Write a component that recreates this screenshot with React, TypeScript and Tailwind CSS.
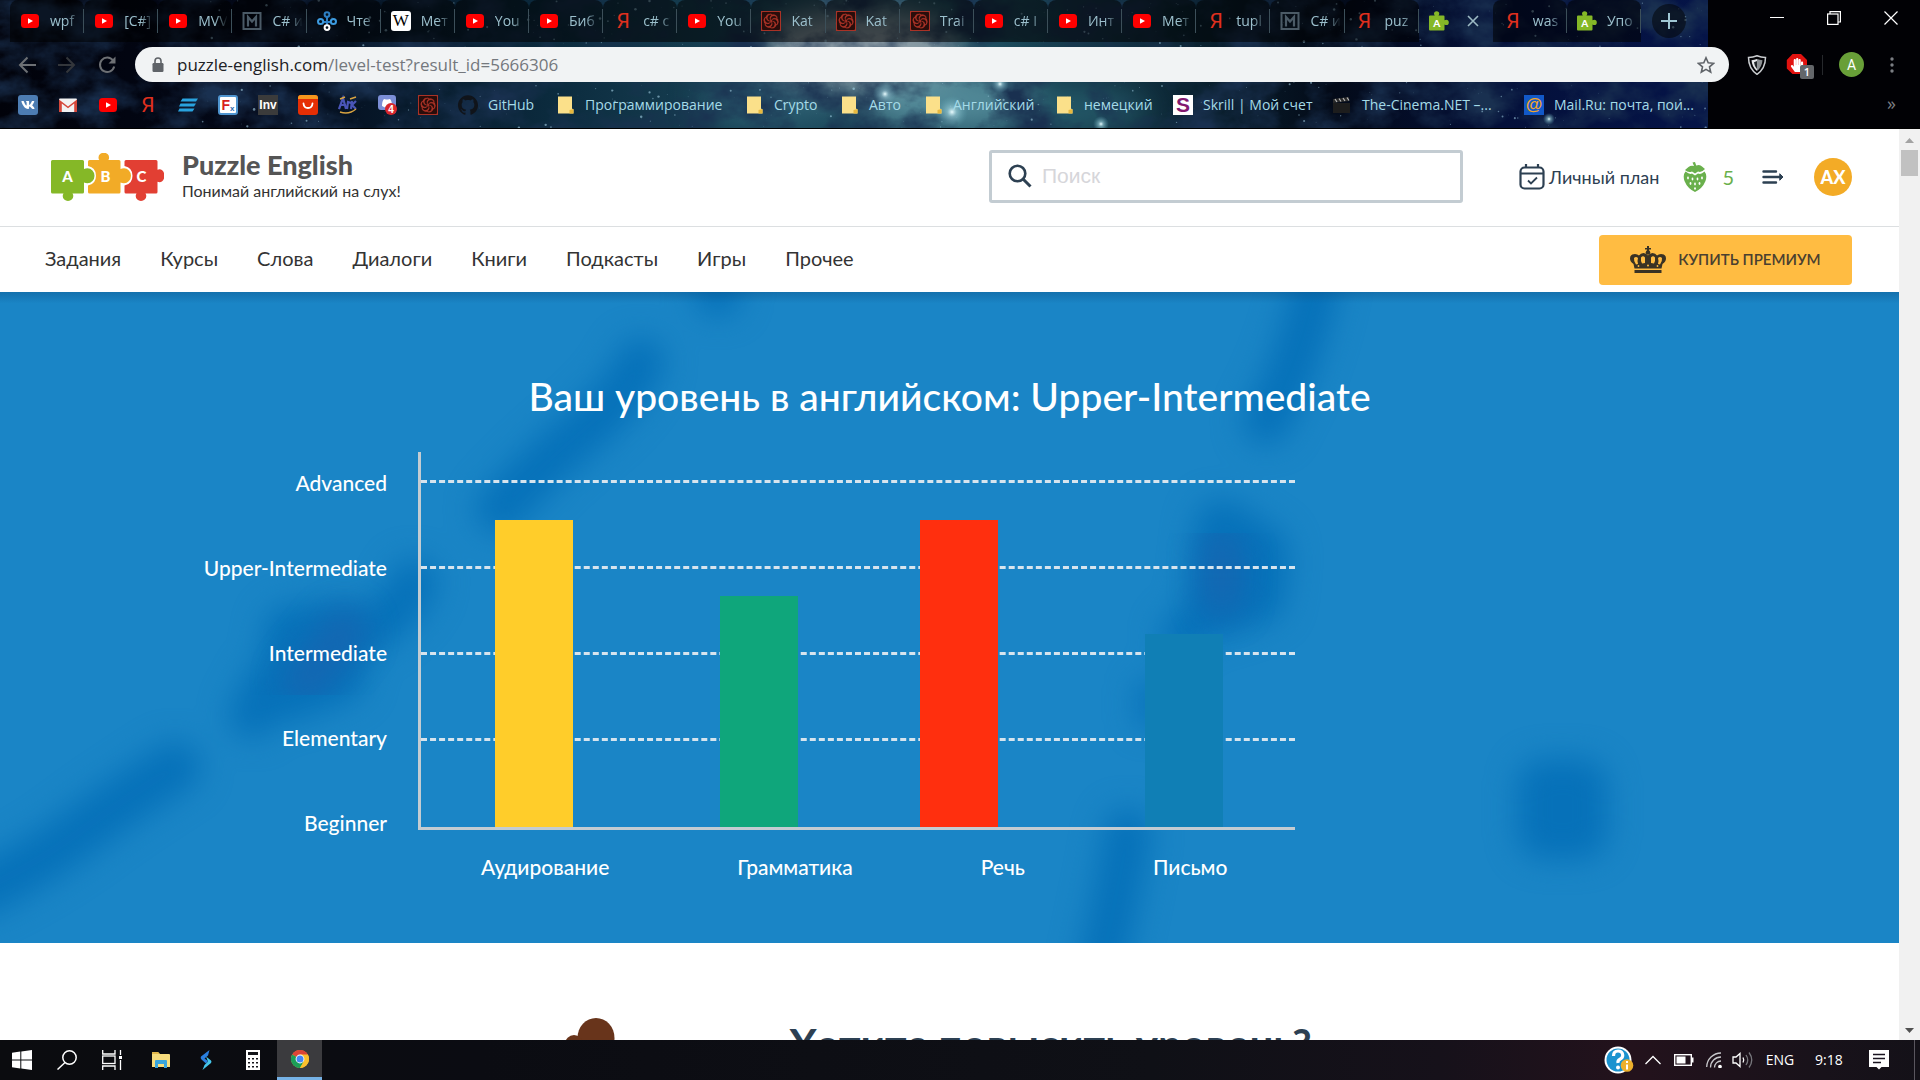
import type { ReactNode } from "react";
import { SiCodewars, SiGithub } from "react-icons/si";
import { FaVk, FaHandPaper } from "react-icons/fa";

/* ---------- favicons ---------- */

const YouTube = () => (
  <svg className="h-5 w-5 shrink-0" viewBox="0 0 20 20" aria-hidden="true">
    <rect x="1" y="3" width="18" height="14" rx="3.5" fill="#ff0000" />
    <path d="M8 7.2v5.6l5-2.8z" fill="#fff" />
  </svg>
);

const Yandex = () => (
  <span className="flex h-5 w-5 shrink-0 items-center justify-center font-['Roboto',sans-serif] text-[21px] leading-5 text-[#e0301e]">
    Я
  </span>
);

const Metanit = () => (
  <svg className="h-5 w-5 shrink-0" viewBox="0 0 20 20" fill="none" stroke="#4b5a66" aria-hidden="true">
    <rect x="1.5" y="2" width="17" height="16" strokeWidth="2" />
    <path d="M6 15.5V6l4 4.5L14 6v9.5" strokeWidth="2.2" />
  </svg>
);

const Nodes = () => (
  <svg className="h-5 w-5 shrink-0" viewBox="0 0 20 20" fill="none" strokeWidth="2" aria-hidden="true">
    <path d="M10 5v10M5 11h10" stroke="#2d7fc4" />
    <circle cx="10" cy="3.6" r="2.4" stroke="#2d7fc4" fill="#04101c" />
    <circle cx="3.6" cy="10.5" r="2.6" stroke="#3d9be0" fill="#04101c" />
    <circle cx="16.4" cy="10.5" r="2.6" stroke="#3d9be0" fill="#04101c" />
    <circle cx="10" cy="16.6" r="2.4" stroke="#fff" fill="#04101c" />
  </svg>
);

const Wiki = () => (
  <span className="flex h-5 w-5 shrink-0 items-center justify-center rounded-[3px] bg-white font-['Liberation_Serif',serif] text-[17px] leading-5 text-black">
    W
  </span>
);

const Codewars = () => (
  <span className="flex h-5 w-5 shrink-0 items-center justify-center bg-[#a93226]">
    <SiCodewars className="h-[18px] w-[18px] text-[#2a0d0b]" />
  </span>
);

const PuzzlePiece = () => (
  <svg className="h-5 w-5 shrink-0" viewBox="0 0 20 20" aria-hidden="true">
    <path
      d="M0 5.5Q0 4.500 1 4.500H5.800Q5 3.500 5 2.800A2.600 2.600 0 0 1 10.300 2.800Q10.300 3.500 9.500 4.500H14.500Q15.500 4.500 15.500 5.500V9.300Q16.500 8.800 17.200 8.800A2.500 2.500 0 0 1 17.200 14Q16.500 14 15.500 13.400V18.500Q15.500 19.500 14.500 19.500H1Q0 19.500 0 18.500Z"
      fill="#85b827"
    />
    <text x="7.800" y="15.500" textAnchor="middle" fontFamily="Lato, sans-serif" fontWeight="900" fontSize="10" fill="#fff">
      A
    </text>
  </svg>
);

const Folder = () => (
  <svg className="h-5 w-5 shrink-0" viewBox="0 0 20 20" aria-hidden="true">
    <path d="M3 1.500h14v12l1.500 1v4H3z" fill="#fbe08a" />
    <path d="M14.500 18.500v-3.500l4-1v4.500z" fill="#e8b93e" />
  </svg>
);

/* ---------- browser data ---------- */

type Tab = { icon: () => ReactNode; text: string; active?: boolean };

const tabs: Tab[] = [
  { icon: YouTube, text: "wpf" },
  { icon: YouTube, text: "[C#]" },
  { icon: YouTube, text: "MVV" },
  { icon: Metanit, text: "C# и" },
  { icon: Nodes, text: "Чте" },
  { icon: Wiki, text: "Мет" },
  { icon: YouTube, text: "You" },
  { icon: YouTube, text: "Биб" },
  { icon: Yandex, text: "c# с" },
  { icon: YouTube, text: "You" },
  { icon: Codewars, text: "Kat" },
  { icon: Codewars, text: "Kat" },
  { icon: Codewars, text: "Trai" },
  { icon: YouTube, text: "c# I" },
  { icon: YouTube, text: "Инт" },
  { icon: YouTube, text: "Мет" },
  { icon: Yandex, text: "tupl" },
  { icon: Metanit, text: "C# и" },
  { icon: Yandex, text: "puz" },
  { icon: PuzzlePiece, text: "", active: true },
  { icon: Yandex, text: "was" },
  { icon: PuzzlePiece, text: "Упо" },
];

const iconBookmarks: { name: string; icon: ReactNode }[] = [
  {
    name: "VK",
    icon: (
      <span className="flex h-5 w-5 items-center justify-center rounded-[3px] bg-[#4d7db3]">
        <FaVk className="h-3.5 w-3.5 text-white" />
      </span>
    ),
  },
  {
    name: "Gmail",
    icon: (
      <svg className="h-5 w-5" viewBox="0 0 20 20" aria-hidden="true">
        <rect x="1" y="3.500" width="18" height="13.500" rx="1" fill="#f2f2f2" />
        <path d="M1 17V4.500L10 11.500 19 4.500V17h-2.800V8.500L10 13.200 3.800 8.500V17z" fill="#d5483b" />
      </svg>
    ),
  },
  { name: "YouTube", icon: <YouTube /> },
  { name: "Яндекс", icon: <Yandex /> },
  {
    name: "Полосы",
    icon: (
      <svg className="h-5 w-5" viewBox="0 0 20 20" fill="#29a3df" aria-hidden="true">
        <path d="M4.500 3.500H20l-2 3H2.500zM2.500 8.500H18l-2 3H1zM1.500 13.500H16.500l-2 3H0z" />
      </svg>
    ),
  },
  {
    name: "Fx",
    icon: (
      <span className="flex h-5 w-5 items-center justify-center rounded-[3px] border-2 border-[#4f95d0] bg-white font-['Liberation_Sans',sans-serif] text-sm leading-4 font-bold text-[#d81e1e]">
        F<span className="self-end text-[8px] leading-2 text-[#2b6cb0]">x</span>
      </span>
    ),
  },
  {
    name: "Inv",
    icon: (
      <span className="flex h-5 w-5 items-center justify-center bg-[#3b3b3b] font-['Liberation_Sans',sans-serif] text-[12px] leading-5 font-bold text-white">
        Inv
      </span>
    ),
  },
  {
    name: "AliExpress",
    icon: (
      <svg className="h-5 w-5" viewBox="0 0 20 20" aria-hidden="true">
        <rect width="20" height="20" rx="3" fill="#e62e04" />
        <path d="M0 3a3 3 0 0 1 3-3h14a3 3 0 0 1 3 3v1H0z" fill="#f7971d" />
        <path d="M5.500 8.500c.5 6 8.500 6 9 0" fill="none" stroke="#fff" strokeWidth="1.800" strokeLinecap="round" />
      </svg>
    ),
  },
  {
    name: "Ark",
    icon: (
      <svg className="h-5 w-5" viewBox="0 0 20 20" fill="none" aria-hidden="true">
        <path d="M1 14L5 3l3 11M3 10h5M9 14l1-7 3 1M13 14l1-8M18 6l-4 4 4 4" stroke="#4a55b8" strokeWidth="2.200" />
        <path d="M2 4l5-2M2 17q9 3 16-3M12 4l6-2" stroke="#d9a441" strokeWidth="1.400" />
      </svg>
    ),
  },
  {
    name: "Discord",
    icon: (
      <svg className="h-5 w-5" viewBox="0 0 20 20" aria-hidden="true">
        <path d="M3 0h12q3 0 3 3v15l-4-3H3q-3 0-3-3V3q0-3 3-3z" fill="#7b8ed6" />
        <path d="M4 11q0-5 2-7l2 .6h2L12 4q2 2 2 7l-3 1.500-1-1.200H8L7 12.500z" fill="#fff" />
        <circle cx="13" cy="14" r="6" fill="#d8262c" />
        <text x="13" y="17.500" textAnchor="middle" fontFamily="Liberation Sans, sans-serif" fontWeight="700" fontSize="10" fill="#fff">
          4
        </text>
      </svg>
    ),
  },
  { name: "Codewars", icon: <Codewars /> },
];

const Skrill = () => (
  <span className="flex h-5 w-5 shrink-0 items-center justify-center bg-white font-['Liberation_Sans',sans-serif] text-[21px] leading-5 font-bold text-[#82196f]">
    S
  </span>
);

const Cinema = () => (
  <svg className="h-5 w-5 shrink-0" viewBox="0 0 20 20" aria-hidden="true">
    <rect x="1" y="8" width="17" height="10" fill="#1d1d1d" />
    <path d="M1 4l16-2v4L1 8z" fill="#2b2b2b" />
    <path d="M3 4l2 3M7 3.500l2 3M11 3l2 3M15 2.500l2 3" stroke="#b8b8b8" strokeWidth="1.200" />
  </svg>
);

const MailRu = () => (
  <span className="flex h-5 w-5 shrink-0 items-center justify-center bg-[#1259c9] font-['Liberation_Sans',sans-serif] text-[17px] leading-5 font-bold text-[#f2a62c]">
    @
  </span>
);

const textBookmarks: { text: string; icon: ReactNode; width: string }[] = [
  { text: "GitHub", icon: <SiGithub className="h-5 w-5 shrink-0 text-[#10141a]" />, width: "w-[97px]" },
  { text: "Программирование", icon: <Folder />, width: "w-[189px]" },
  { text: "Crypto", icon: <Folder />, width: "w-[95px]" },
  { text: "Авто", icon: <Folder />, width: "w-[84px]" },
  { text: "Английский", icon: <Folder />, width: "w-[131px]" },
  { text: "немецкий", icon: <Folder />, width: "w-[119px]" },
  { text: "Skrill | Мой счет", icon: <Skrill />, width: "w-[159px]" },
  { text: "The-Cinema.NET –...", icon: <Cinema />, width: "w-[192px]" },
  { text: "Mail.Ru: почта, пои...", icon: <MailRu />, width: "w-[180px]" },
];

/* ---------- browser theme: night sky ---------- */

const stars = Array.from({ length: 620 }, (_, i) => {
  const a = Math.abs(Math.sin(i * 12.9898 + 4.1) * 43758.5453) % 1;
  const b = Math.abs(Math.sin(i * 78.233 + 1.7) * 24634.6345) % 1;
  const c = Math.abs(Math.sin(i * 39.425 + 2.3) * 13758.1234) % 1;
  return { x: 200 + a * 1508, y: b * 128, r: 0.4 + c * c * c * 0.9, o: 0.15 + c * 0.45 };
});

const NightSky = () => (
  <svg
    className="absolute inset-0 h-full w-full"
    viewBox="0 0 1920 128"
    preserveAspectRatio="xMidYMid slice"
    aria-hidden="true"
  >
    <defs>
      <linearGradient id="sky" x1="0" x2="1708" y1="0" y2="0" gradientUnits="userSpaceOnUse">
        <stop offset="0" stopColor="#01020a" />
        <stop offset="0.15" stopColor="#030818" />
        <stop offset="0.32" stopColor="#0b2a3d" />
        <stop offset="0.45" stopColor="#1a4558" />
        <stop offset="0.58" stopColor="#1d4c5e" />
        <stop offset="0.7" stopColor="#0a2230" />
        <stop offset="0.78" stopColor="#030a18" />
        <stop offset="0.88" stopColor="#04103a" />
        <stop offset="1" stopColor="#051448" />
      </linearGradient>
      <filter id="soft" x="-30%" y="-60%" width="160%" height="220%" colorInterpolationFilters="sRGB">
        <feGaussianBlur stdDeviation="16" />
      </filter>
      <filter id="cloud" x="0" y="0" width="100%" height="100%">
        <feTurbulence type="fractalNoise" baseFrequency="0.018 0.025" numOctaves="5" seed="8" />
        <feColorMatrix values="0 0 0 0 0.01  0 0 0 0 0.03  0 0 0 0 0.08  2.6 0 0 0 -1" />
      </filter>
      <radialGradient id="glow">
        <stop offset="0" stopColor="#eafcff" />
        <stop offset="0.3" stopColor="#9fd3dd" stopOpacity="0.6" />
        <stop offset="1" stopColor="#5fa5b5" stopOpacity="0" />
      </radialGradient>
    </defs>
    <rect width="1920" height="128" fill="#010105" />
    <rect width="1708" height="128" fill="url(#sky)" />
    <g filter="url(#soft)">
      <ellipse cx="860" cy="50" rx="100" ry="40" fill="#9aa6ae" opacity="0.9" />
      <ellipse cx="950" cy="100" rx="90" ry="32" fill="#5f98a6" opacity="0.8" />
      <ellipse cx="770" cy="100" rx="70" ry="26" fill="#336a7c" opacity="0.7" />
      <ellipse cx="1080" cy="110" rx="70" ry="20" fill="#2c6878" opacity="0.7" />
    </g>
    <rect width="1708" height="128" filter="url(#cloud)" />
    {stars.map((s, i) => (
      <circle key={i} cx={s.x} cy={s.y} r={s.r} fill="#a8d4e8" opacity={s.o} />
    ))}
    <circle cx="885" cy="94" r="12" fill="url(#glow)" />
    <circle cx="952" cy="112" r="16" fill="url(#glow)" />
    <circle cx="1000" cy="84" r="9" fill="url(#glow)" />
    <circle cx="1101" cy="124" r="8" fill="url(#glow)" />
    <circle cx="1549" cy="119" r="6" fill="url(#glow)" />
    <rect x="1708" width="212" height="128" fill="#010105" />
  </svg>
);

const Browser = () => (
  <header className="relative shrink-0 border-b border-black bg-black font-['Open_Sans',sans-serif]">
    <NightSky />
    <div className="relative">
      <div className="flex h-[42px] pl-2.5">
        <ul className="flex min-w-0 flex-1">
          {tabs.map((t, i) => (
            <li
              key={i}
              className={
                t.active ? "flex min-w-0 flex-1 items-center" : "flex min-w-0 flex-1 items-center rounded-t-lg bg-black/55"
              }
            >
              {t.active ? (
                <div className="flex w-full items-center justify-between pr-2.5 pl-2.5">
                  <t.icon />
                  <button aria-label="Закрыть вкладку" className="p-1">
                    <svg className="h-3 w-3" viewBox="0 0 12 12" stroke="#9dbac4" strokeWidth="1.600" aria-hidden="true">
                      <path d="M1 1l10 10M11 1L1 11" />
                    </svg>
                  </button>
                </div>
              ) : (
                <button className="flex h-6 min-w-0 flex-1 items-center gap-2.5 border-r border-[#3c4f59] pl-2.5">
                  <t.icon />
                  <span className="min-w-0 flex-1 text-left text-sm whitespace-nowrap text-[#9cc0cd] [mask-image:linear-gradient(to_right,black_50%,transparent_90%)]">
                    {t.text}
                  </span>
                </button>
              )}
            </li>
          ))}
        </ul>
        <div className="flex w-[279px] shrink-0 justify-between pr-[22px] pl-[11px]">
          <button
            aria-label="Новая вкладка"
            className="mt-1 flex h-[34px] w-[34px] items-center justify-center rounded-full bg-black/50"
          >
            <svg className="h-4 w-4" viewBox="0 0 16 16" stroke="#9fc6d4" strokeWidth="2" aria-hidden="true">
              <path d="M8 0v16M0 8h16" />
            </svg>
          </button>
          <div className="flex h-9 items-center gap-[43px]">
            <button aria-label="Свернуть">
              <svg className="h-3.5 w-3.5" viewBox="0 0 14 14" stroke="#fff" aria-hidden="true">
                <path d="M0 6.500h14" />
              </svg>
            </button>
            <button aria-label="Восстановить">
              <svg className="h-3.5 w-3.5" viewBox="0 0 14 14" fill="none" stroke="#fff" strokeWidth="1.200" aria-hidden="true">
                <rect x="0.600" y="3" width="10.400" height="10.400" />
                <path d="M3 3V.6h10.400V11H11" />
              </svg>
            </button>
            <button aria-label="Закрыть">
              <svg className="h-3.5 w-3.5" viewBox="0 0 14 14" stroke="#fff" strokeWidth="1.200" aria-hidden="true">
                <path d="M.5.5l13 13M13.500.5l-13 13" />
              </svg>
            </button>
          </div>
        </div>
      </div>

      <div className="flex items-center pt-[5px] pr-5 pl-[18px]">
        <div className="flex w-[117px] items-center gap-[22px]">
          <button aria-label="Назад">
            <svg className="h-[18px] w-[18px]" viewBox="0 0 18 18" fill="none" stroke="#6d7074" strokeWidth="2" aria-hidden="true">
              <path d="M18 9H2M9.500 1.500L2 9l7.500 7.500" />
            </svg>
          </button>
          <button aria-label="Вперёд">
            <svg className="h-[18px] w-[18px]" viewBox="0 0 18 18" fill="none" stroke="#33363b" strokeWidth="2" aria-hidden="true">
              <path d="M0 9h16M8.500 1.500L16 9l-7.500 7.500" />
            </svg>
          </button>
          <button aria-label="Обновить">
            <svg className="h-[18px] w-[18px]" viewBox="0 0 18 18" fill="none" stroke="#6d7074" strokeWidth="2" aria-hidden="true">
              <path d="M15 4.500A7.200 7.200 0 1 0 16.200 10.500" />
              <path d="M17.500.5v7h-7z" fill="#6d7074" stroke="none" />
            </svg>
          </button>
        </div>
        <div className="flex h-[35px] min-w-0 flex-1 items-center rounded-full bg-[#f1f3f4] pr-3.5 pl-4">
          <svg className="mr-3 h-4 w-3.5 shrink-0" viewBox="0 0 14 16" aria-hidden="true">
            <rect x="1.500" y="6" width="11" height="9" rx="1.200" fill="#5f6368" />
            <path d="M4 6.500V4a3 3 0 0 1 6 0v2.500" fill="none" stroke="#5f6368" strokeWidth="1.600" />
          </svg>
          <a href="#url" className="flex-1 text-[17px] whitespace-nowrap text-[#202124]">
            puzzle-english.com<span className="text-[#74787d]">/level-test?result_id=5666306</span>
          </a>
          <button aria-label="Добавить в закладки">
            <svg className="h-[18px] w-[18px]" viewBox="0 0 18 18" fill="none" stroke="#5f6368" strokeWidth="1.600" strokeLinejoin="miter" aria-hidden="true">
              <path d="M9 1.800l2.200 5 5.400.5-4.100 3.600 1.200 5.300L9 13.400l-4.700 2.800 1.200-5.300L1.400 7.300l5.400-.5z" />
            </svg>
          </button>
        </div>
        <div className="flex items-center pl-[18px]">
          <button aria-label="Adguard">
            <svg className="h-5 w-5" viewBox="0 0 20 20" aria-hidden="true">
              <path d="M10 .8Q14 2.500 18.500 2.500 18.500 13.500 10 19.300 1.500 13.500 1.500 2.500 6 2.500 10 .8z" fill="none" stroke="#c9ccd0" strokeWidth="1.500" />
              <path d="M10 4Q12.500 5 15.500 5.200 15 12 10 16z" fill="#8c9094" />
              <path d="M10 4Q7.500 5 4.500 5.200 5 12 10 16z" fill="#e6e8ea" />
              <path d="M10 6v8Q7.500 11.500 7 7.200z" fill="#23272b" />
            </svg>
          </button>
          <button aria-label="AdBlock" className="relative ml-[19px] flex h-6 w-6 items-center">
            <svg className="absolute top-0 left-0 h-[22px] w-[22px]" viewBox="0 0 22 22" aria-hidden="true">
              <path d="M6.500 1h8.500L21 7v8.500L15 21H6.500L.8 15.500V7z" fill="#e2120f" />
            </svg>
            <FaHandPaper className="relative ml-1 h-3.5 w-3.5 text-white" />
            <span className="absolute top-3 left-3.5 flex h-3.5 w-3.5 items-center justify-center rounded-[2px] bg-[#63666a] text-[11px] leading-3.5 font-semibold text-white">
              1
            </span>
          </button>
          <span className="ml-3 h-5 w-px bg-[#26282c]" />
          <button
            aria-label="Профиль"
            className="ml-4 flex h-[25px] w-[25px] items-center justify-center rounded-full bg-[#689f38] font-['Roboto',sans-serif] text-sm text-white"
          >
            A
          </button>
          <button aria-label="Меню" className="ml-5 w-4">
            <svg className="mx-auto h-4 w-1" viewBox="0 0 4 16" fill="#7b7e83" aria-hidden="true">
              <circle cx="2" cy="2" r="1.700" />
              <circle cx="2" cy="8" r="1.700" />
              <circle cx="2" cy="14" r="1.700" />
            </svg>
          </button>
        </div>
      </div>

      <nav
        aria-label="Закладки"
        className="flex h-[46px] items-center pr-6 pl-[18px] text-sm whitespace-nowrap text-[#a5dbe8]"
      >
        {iconBookmarks.map((b) => (
          <a key={b.name} href="#bookmark" aria-label={b.name} className="mr-5 shrink-0">
            {b.icon}
          </a>
        ))}
        {textBookmarks.map((b) => (
          <a key={b.text} href="#bookmark" className={`${b.width} flex shrink-0 items-center gap-2.5`}>
            {b.icon}
            <span>{b.text}</span>
          </a>
        ))}
        <button aria-label="Другие закладки" className="ml-auto pb-1 text-lg text-[#7b7e83]">
          »
        </button>
      </nav>
    </div>
  </header>
);

/* ---------- site ---------- */

const Logo = () => (
  <svg className="h-12 w-[113px] shrink-0" viewBox="0 0 113 48" aria-hidden="true">
    <path
      d="M0 8.500q0-1.500 1.500-1.500h30q1.500 0 1.500 1.500V16q1.500-.8 3.500-.8a7 7.500 0 0 1 0 15Q34.500 30.200 33 29.500v9.500q0 1.500-1.500 1.500H21.500q.8 1 .8 2.500a5.300 5 0 0 1-10.600 0q0-1.500.8-2.500H1.500Q0 40.500 0 39z"
      fill="#85b827"
    />
    <path
      d="M37 8.500q0-1.500 1.500-1.500h9.800q-.8-1-.8-2.500a5.300 4.800 0 0 1 10.600 0q0 1.500-.8 2.500H68q1.500 0 1.500 1.500V16q1.500-.8 3.500-.8a7 7.500 0 0 1 0 15q-2 0-3.500-.7v9.500q0 1.500-1.500 1.500H38.500Q37 40.500 37 39v-6.500q8-1.500 8-9.800t-8-9.800z"
      fill="#f2ab27"
    />
    <path
      d="M73.500 8.500q0-1.500 1.500-1.500h30q1.500 0 1.500 1.500v8.200q4.500-1.700 6.500 3.300v5.500q-2 5-6.500 3.300V39q0 1.500-1.500 1.500H94.500q.8 1 .8 2.500a5.300 5 0 0 1-10.600 0q0-1.500.8-2.500H75q-1.500 0-1.500-1.500v-6.500q8-1.500 8-9.800t-8-9.800z"
      fill="#e23f33"
    />
    <g fill="#fff" fontFamily="Lato, sans-serif" fontWeight="900" fontSize="15" textAnchor="middle">
      <text x="16.500" y="29">A</text>
      <text x="54.500" y="29">B</text>
      <text x="90.500" y="29">C</text>
    </g>
  </svg>
);

const Calendar = () => (
  <svg className="h-[26px] w-[26px]" viewBox="0 0 26 26" fill="none" stroke="#2d4052" strokeWidth="2.200" aria-hidden="true">
    <rect x="1.500" y="3.500" width="23" height="21" rx="4" />
    <path d="M1.500 9.500h23M7 0v4M19 0v4" />
    <path d="M9 16.500l3 3 6-6" strokeWidth="1.800" />
  </svg>
);

const Strawberry = () => (
  <svg className="h-[30px] w-6" viewBox="0 0 24 30" aria-hidden="true">
    <path d="M2.500 9.500Q7 13 9 11.500l3 2 3-2q3 1.500 6.500-2Q24.500 13 22.500 19 19.500 26.500 12 30 4.500 26.500 1.500 19-.5 13 2.500 9.500z" fill="#6ab04c" />
    <path d="M11 4L9.500.5 12 0l1.200 3.500Q17 2 19 4.500l3 2.500q-3.500 4-7 2.500l-3 2-3-2q-4 1.500-7-1.500L5.500 5Q8 3 11 4z" fill="#6ab04c" />
    <g fill="#fff">
      <ellipse cx="5" cy="16" rx="0.900" ry="1.400" />
      <ellipse cx="9.500" cy="17" rx="0.900" ry="1.400" />
      <ellipse cx="14.500" cy="17" rx="0.900" ry="1.400" />
      <ellipse cx="19" cy="16" rx="0.900" ry="1.400" />
      <ellipse cx="7.500" cy="21.500" rx="0.900" ry="1.400" />
      <ellipse cx="12" cy="22" rx="0.900" ry="1.400" />
      <ellipse cx="16.500" cy="21.500" rx="0.900" ry="1.400" />
      <ellipse cx="12" cy="26.500" rx="0.900" ry="1.300" />
    </g>
  </svg>
);

const Crown = () => (
  <svg className="h-[27px] w-9" viewBox="0 0 36 27" aria-hidden="true">
    <g fill="#3a3224">
      <path d="M17 0h2v2h2v1.600h-2V5h-2V3.600h-2V2h2z" />
      <circle cx="18" cy="6.500" r="2.300" />
      <path d="M4.500 22.500L3.500 18Q0 15.500 0 12.500 0 8 5 8q2.500 0 4 1.500Q10.500 7 13.500 7q2.800 0 4.500 2.500Q19.700 7 22.500 7q3 0 4.500 2.500Q28.500 8 31 8q5 0 5 4.500 0 3-3.500 5.500l-1 4.500z" />
      <rect x="4.500" y="24" width="27" height="3" />
    </g>
    <g fill="#ffbc42">
      <path d="M4 12q2-2 4 0-1 3 0 6l-2 .5Q3.500 15 4 12zM11 11.500q2-2.500 4 0v5.500l-3 .5q-1.500-3-1-6zM32 12q-2-2-4 0 1 3 0 6l2 .5q2.500-3.500 2-6.500zM25 11.500q-2-2.500-4 0v5.500l3 .5q1.500-3 1-6z" />
      <circle cx="8.500" cy="20" r="0.900" />
      <circle cx="18" cy="19.500" r="1" />
      <circle cx="27.500" cy="20" r="0.900" />
    </g>
  </svg>
);

const menu = ["Задания", "Курсы", "Слова", "Диалоги", "Книги", "Подкасты", "Игры", "Прочее"];

const levels = ["Advanced", "Upper-Intermediate", "Intermediate", "Elementary", "Beginner"];
const skills = ["Аудирование", "Грамматика", "Речь", "Письмо"];
const bars = [
  { skill: "Аудирование", style: "ml-[74px] bg-[#ffcd2a]", height: 307 },
  { skill: "Грамматика", style: "ml-[147px] bg-[#0fa67b]", height: 231 },
  { skill: "Речь", style: "ml-[122px] bg-[#ff2f0e]", height: 307 },
  { skill: "Письмо", style: "ml-[147px] bg-[#107fb5]", height: 193 },
];

const HeroBackdrop = () => (
  <svg className="absolute inset-0 h-full w-full" viewBox="0 0 1899 652" preserveAspectRatio="xMidYMid slice" aria-hidden="true">
    <defs>
      <filter id="haze" x="-10%" y="-10%" width="120%" height="120%" colorInterpolationFilters="sRGB">
        <feGaussianBlur stdDeviation="15" />
      </filter>
      <linearGradient id="edge" x1="0" x2="0" y1="0" y2="1">
        <stop offset="0" stopColor="#0a4f84" stopOpacity="0.4" />
        <stop offset="1" stopColor="#0a4f84" stopOpacity="0" />
      </linearGradient>
    </defs>
    <g filter="url(#haze)" fill="none" stroke="#0671b9" strokeLinecap="round" strokeLinejoin="round">
      <path d="M718 -20V2" strokeWidth="46" />
      <path d="M641 70Q625 105 582 140T500 218" strokeWidth="48" />
      <path d="M414 290Q405 320 350 350" strokeWidth="46" />
      <path d="M290 340L345 335 340 385 285 405z" strokeWidth="52" fill="#0671b9" />
      <path d="M270 390L252 424" strokeWidth="46" />
      <path d="M176 475Q120 510 80 540T-20 600" strokeWidth="50" />
      <path d="M1318 -20Q1305 60 1266 130" strokeWidth="46" />
      <path d="M1222 235L1262 262 1258 305 1212 320z" strokeWidth="54" fill="#0671b9" />
      <path d="M1208 320L1180 345" strokeWidth="40" />
      <path d="M1150 400V425" strokeWidth="26" />
      <path d="M1128 540Q1118 600 1100 680" strokeWidth="46" />
      <path d="M1545 495h35v45h-35z" strokeWidth="56" fill="#0671b9" />
    </g>
    <g filter="url(#haze)" fill="none" stroke="#1467b2" strokeLinecap="round">
      <path d="M305 390L345 340" strokeWidth="44" />
      <path d="M1222 255L1222 305" strokeWidth="40" />
    </g>
    <rect width="1899" height="12" fill="url(#edge)" />
  </svg>
);

const Chart = () => (
  <div className="relative flex pl-[204px]">
    <ul className="w-[183px] shrink-0 text-right text-[21px] font-medium text-white">
      {levels.map((l) => (
        <li key={l} className="flex h-[85px] items-center justify-end whitespace-nowrap">
          {l}
        </li>
      ))}
    </ul>
    <div className="mt-3 ml-[31px] w-[877px]">
      <div className="relative flex h-[378px] items-end border-b-[3px] border-l-[3px] border-[#c3ccd2]">
        <div className="absolute inset-0 pt-7">
          {levels.slice(0, 4).map((l) => (
            <div key={l} className="h-[86px] border-t-[3px] border-dashed border-[#d6e4ee]" />
          ))}
        </div>
        {bars.map((b) => (
          <div key={b.skill} className={`${b.style} relative w-[78px] shrink-0`} style={{ height: b.height }} />
        ))}
      </div>
      <ul className="mt-[22px] flex gap-32 pl-[63px] text-[21px] leading-[30px] font-medium whitespace-nowrap text-white">
        {skills.map((s) => (
          <li key={s}>{s}</li>
        ))}
      </ul>
    </div>
  </div>
);

const Site = () => (
  <div className="flex min-h-0 flex-1 font-['Lato',sans-serif]">
    <div className="min-w-0 flex-1 overflow-hidden bg-white">
      <div className="flex h-[98px] items-center border-b border-[#dcdfe1] pr-[47px] pb-0.5 pl-[51px]">
        <a href="#home" className="flex items-center gap-[18px]">
          <Logo />
          <span className="block">
            <span className="block text-[27px] leading-7 font-black text-[#555]">Puzzle English</span>
            <span className="block text-base text-[#333]">Понимай английский на слух!</span>
          </span>
        </a>
        <div className="ml-auto flex items-center">
          <label className="flex h-[53px] w-[474px] items-center rounded-[3px] border-[3px] border-[#c3ccd2] pb-0.5 pl-4">
            <svg className="h-6 w-6 shrink-0" viewBox="0 0 24 24" fill="none" stroke="#2d4052" strokeWidth="2.600" aria-hidden="true">
              <circle cx="9.500" cy="9.500" r="7.800" />
              <path d="M15 15l7.500 7.500" strokeWidth="3" />
            </svg>
            <input
              type="search"
              aria-label="Поиск"
              placeholder="Поиск"
              className="ml-2.5 min-w-0 flex-1 bg-transparent font-['Liberation_Sans',sans-serif] text-[21px] outline-none placeholder:text-[#d6d6da]"
            />
          </label>
          <a href="#plan" className="ml-14 flex items-center gap-1 text-lg whitespace-nowrap text-[#2d4052]">
            <Calendar />
            Личный план
          </a>
          <a href="#berries" className="ml-6 flex items-center gap-[15px] text-xl text-[#6ab04c]">
            <Strawberry />5
          </a>
          <button aria-label="Меню" className="ml-7">
            <svg className="h-4 w-[22px]" viewBox="0 0 22 16" stroke="#2d4052" strokeWidth="2.400" strokeLinecap="round" aria-hidden="true">
              <path d="M1.500 2.500H14M1.500 8H18M1.500 13.500H14" />
              <path d="M18 5l3 3-3 3z" fill="#2d4052" strokeWidth="1" />
            </svg>
          </button>
          <button className="ml-[30px] flex h-[38px] w-[38px] items-center justify-center rounded-full bg-[#f3ab26] text-lg font-black text-white">
            AX
          </button>
        </div>
      </div>

      <nav className="flex h-[65px] items-center justify-between pr-[47px] pl-[45px]">
        <ul className="flex gap-[39px] pb-1 text-xl text-[#333]">
          {menu.map((m) => (
            <li key={m}>
              <a href="#section">{m}</a>
            </li>
          ))}
        </ul>
        <button className="flex h-[50px] w-[253px] items-center justify-center gap-3 rounded bg-[#ffbc42] text-[15px] font-semibold whitespace-nowrap text-[#4a4030]">
          <Crown />
          КУПИТЬ ПРЕМИУМ
        </button>
      </nav>

      <section className="relative overflow-hidden bg-[#1a85c6] pt-20 pb-[61px]">
        <HeroBackdrop />
        <h1 className="relative mb-5 text-center text-[39px] leading-[48px] font-medium text-white">
          Ваш уровень в английском: Upper-Intermediate
        </h1>
        <Chart />
      </section>

      <section className="flex pt-[75px] pl-[564px]">
        <svg className="h-24 w-[60px] shrink-0" viewBox="0 0 60 96" fill="#68341b" aria-hidden="true">
          <ellipse cx="32" cy="20" rx="18.500" ry="20" />
          <circle cx="10" cy="26" r="9" />
        </svg>
        <h2 className="ml-[165px] text-[42px] leading-[52px] font-bold whitespace-nowrap text-[#2d4052]">
          Хотите повысить уровень?
        </h2>
      </section>
    </div>

    <div className="flex w-[21px] shrink-0 flex-col items-center bg-[#f1f1f1] pt-2 pb-1.5" aria-hidden="true">
      <svg className="h-[7px] w-[9px]" viewBox="0 0 9 7">
        <path d="M0 6L4.500 1 9 6z" fill="#a3a3a3" />
      </svg>
      <div className="mt-1.5 h-[26px] w-[17px] bg-[#c1c1c1]" />
      <svg className="mt-auto h-[7px] w-[9px]" viewBox="0 0 9 7">
        <path d="M0 1L4.500 6 9 1z" fill="#505050" />
      </svg>
    </div>
  </div>
);

/* ---------- taskbar ---------- */

const Taskbar = () => (
  <footer className="flex h-10 shrink-0 items-center bg-[linear-gradient(to_right,#0b0c0f_0%,#0b0c12_25%,#0f1016_60%,#16111a_75%,#23121c_85%,#18121a_95%,#141118_100%)] font-['Open_Sans',sans-serif] text-sm text-white">
    <button aria-label="Пуск" className="flex w-11 justify-center">
      <svg className="h-5 w-5" viewBox="0 0 20 20" fill="#fff" aria-hidden="true">
        <path d="M0 2.800L8.300 1.600V9.500H0zM9.300 1.500L20 0v9.500H9.300zM0 10.500h8.300v7.900L0 17.200zM9.300 10.500H20V20L9.300 18.500z" />
      </svg>
    </button>
    <button aria-label="Поиск" className="flex w-[46px] justify-center">
      <svg className="h-5 w-5" viewBox="0 0 20 20" fill="none" stroke="#fff" strokeWidth="1.500" aria-hidden="true">
        <circle cx="12.500" cy="7.500" r="6.700" />
        <path d="M8 12.500L.5 19.500" />
      </svg>
    </button>
    <button aria-label="Представление задач" className="flex w-11 justify-center">
      <svg className="h-5 w-5" viewBox="0 0 20 20" fill="none" stroke="#fff" strokeWidth="1.300" aria-hidden="true">
        <path d="M.7 0v4H13V0M.7 20v-4H13v4M18.500 0v5M18.500 10v10" />
        <rect x="0.700" y="6" width="12.300" height="7.500" />
        <path d="M18.500 6v3" strokeWidth="3" />
      </svg>
    </button>
    <button aria-label="Проводник" className="flex w-[54px] justify-center">
      <svg className="h-[18px] w-[18px]" viewBox="0 0 18 18" aria-hidden="true">
        <path d="M0 2q0-1 1-1h5l2 2h9q1 0 1 1v12H0z" fill="#f7dc7c" />
        <path d="M0 2q0-1 1-1h5l1.500 2H0z" fill="#e3b84a" />
        <path d="M3 17V10q0-1 1-1h10q1 0 1 1v7h-3v-4H6v4z" fill="#39a5dc" />
      </svg>
    </button>
    <button aria-label="Молния" className="flex w-9 justify-center">
      <svg className="h-5 w-3" viewBox="0 0 12 20" aria-hidden="true">
        <path d="M9.500 0L1 6.500Q0 8 1.500 9.500L6 13.500 8 11 4.500 8.500 8 5.500z" fill="#2a7fe0" />
        <path d="M6 6.500L11 10.500Q12 11.500 11 13L2.500 20 4.500 15 8 11.500z" fill="#45c6ea" />
      </svg>
    </button>
    <button aria-label="Калькулятор" className="flex w-[53px] justify-center pl-1">
      <svg className="h-5 w-3.5" viewBox="0 0 14 20" aria-hidden="true">
        <rect width="14" height="20" fill="#fff" />
        <path d="M2 2h10v3H2zM2 8h2v1.500H2zM6 8h2v1.500H6zM10 8h2v1.500h-2zM2 12h2v1.500H2zM6 12h2v1.500H6zM10 12h2v1.500h-2zM2 16h2v1.500H2zM6 16h2v1.500H6zM10 16h2v1.500h-2z" fill="#14151a" />
      </svg>
    </button>
    <button
      aria-label="Google Chrome"
      className="flex h-full w-[45px] items-center justify-center border-b-[3px] border-[#76b2e6] bg-[#3b3b3e]"
    >
      <svg className="h-[18px] w-[18px]" viewBox="0 0 18 18" aria-hidden="true">
        <circle cx="9" cy="9" r="9" fill="#fbc02d" />
        <path d="M9 9L1.200 4.500A9 9 0 0 1 16.800 4.500z" fill="#dc4437" />
        <path d="M9 9L1.200 4.500A9 9 0 0 0 9 18z" fill="#1b9e58" />
        <path d="M9 4.500h7.800L9 9z" fill="#dc4437" />
        <path d="M5.100 11.200L9 18l3.900-6.800z" fill="#1b9e58" />
        <path d="M12.900 11.200L9 18A9 9 0 0 0 16.800 4.500H9z" fill="#fbc02d" />
        <circle cx="9" cy="9" r="4.400" fill="#fff" />
        <circle cx="9" cy="9" r="3.500" fill="#4486f4" />
      </svg>
    </button>

    <div className="ml-auto flex h-full items-center">
      <button aria-label="Справка">
        <svg className="h-[30px] w-[30px]" viewBox="0 0 30 30" aria-hidden="true">
          <circle cx="14" cy="15" r="13.500" fill="#fff" />
          <circle cx="14" cy="15" r="11.500" fill="#1a93cf" />
          <path d="M9.500 11q0-5 4.500-5t4.700 4.200q0 2.600-2.600 4T14 18" fill="none" stroke="#fff" strokeWidth="3.200" />
          <circle cx="14" cy="22.500" r="2" fill="#fff" />
          <circle cx="23" cy="20.500" r="6.300" fill="#edb02c" />
          <path d="M23 19.500v5M23 16v2" stroke="#fff" strokeWidth="2" />
        </svg>
      </button>
      <button aria-label="Скрытые значки" className="ml-[11px]">
        <svg className="h-4 w-4" viewBox="0 0 16 16" fill="none" stroke="#fff" strokeWidth="1.300" aria-hidden="true">
          <path d="M.5 12L8 4.500 15.500 12" />
        </svg>
      </button>
      <svg className="ml-[13px] h-3 w-5" viewBox="0 0 20 12" aria-label="Батарея" role="img">
        <rect x="0.700" y="0.700" width="16.600" height="10.600" fill="none" stroke="#fff" strokeWidth="1.400" />
        <rect x="2.500" y="2.500" width="9" height="7" fill="#fff" />
        <rect x="18" y="3.500" width="1.500" height="5" fill="#fff" />
      </svg>
      <svg className="ml-3 h-4 w-4" viewBox="0 0 16 16" fill="none" stroke="#c9c9cc" strokeWidth="1.300" aria-label="Сеть" role="img">
        <path d="M.7 15A14.300 14.300 0 0 1 15 1M4.500 15.500A10.500 10.500 0 0 1 15 5M8.500 15.500A6.500 6.500 0 0 1 15 9" />
        <circle cx="14" cy="14.500" r="1.200" fill="#fff" stroke="#fff" />
      </svg>
      <svg className="ml-2.5 h-[18px] w-[21px]" viewBox="0 0 21 18" fill="none" stroke="#fff" strokeWidth="1.300" aria-label="Звук" role="img">
        <path d="M1 6h3l4-3.500v13L4 12H1z" />
        <path d="M11 6.500q1.500 2.500 0 5" />
        <path d="M14 4q3.500 5 0 10M17 1.500q5.500 7.500 0 15" stroke="#77777c" />
      </svg>
      <button className="ml-3 w-[30px]">ENG</button>
      <time className="ml-5 w-[29px]">9:18</time>
      <button aria-label="Уведомления" className="ml-[25px]">
        <svg className="h-5 w-5" viewBox="0 0 20 20" aria-hidden="true">
          <path d="M0 0h20v17h-7.500L10 19.500 7.500 17H0z" fill="#fff" />
          <path d="M4 4.500h12M4 8.500h12M4 12.500h8" stroke="#1a1420" strokeWidth="1.300" />
        </svg>
      </button>
      <span className="mr-[5px] ml-[25px] h-full w-px bg-[#5a565e]" />
    </div>
  </footer>
);

export default function App() {
  return (
    <div className="flex h-screen flex-col overflow-hidden bg-white">
      <Browser />
      <Site />
      <Taskbar />
    </div>
  );
}
